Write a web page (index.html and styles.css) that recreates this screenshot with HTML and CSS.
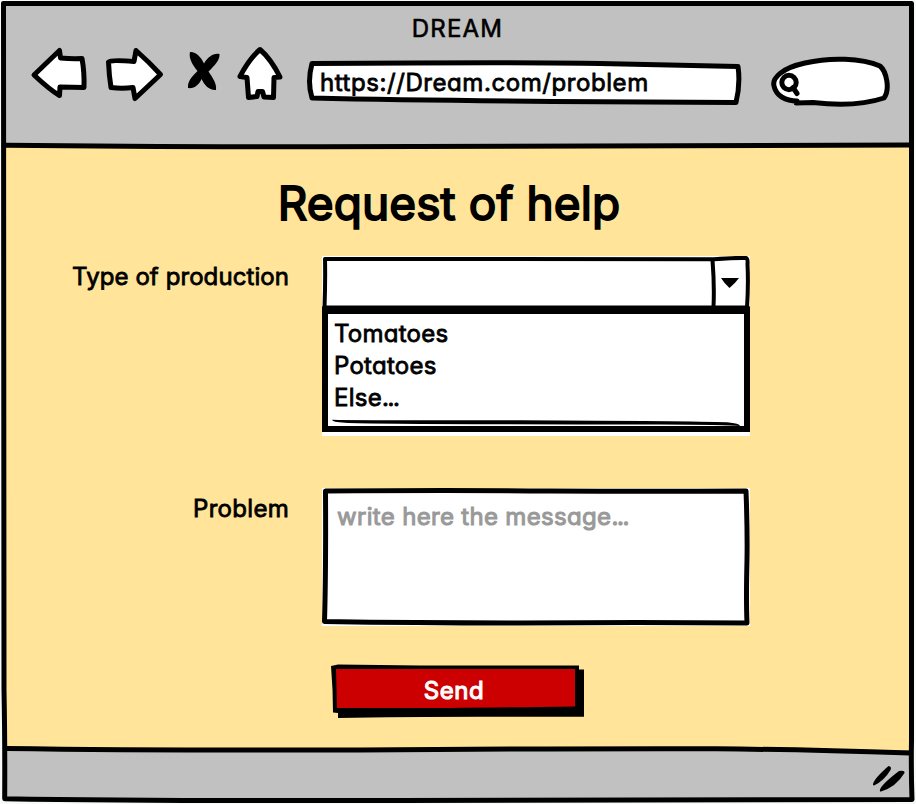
FILE: index.html
```html
<!DOCTYPE html>
<html lang="en">
<head>
<meta charset="utf-8">
<title>DREAM</title>
<link rel="stylesheet" href="styles.css">
</head>
<body>
<div class="window">
  <header class="chrome">
    <div class="chrome-title"><span>DREAM</span></div>
    <nav class="toolbar">
      <svg class="ink back" viewBox="30 45 58 60"><path d="M34 75 L59.5 50.5 L60.5 58 Q72 59 82 58.500 Q84.500 72 84 87.500 Q72 87 60 87 L59.500 95.500 Q50 90 34 75Z"/></svg>
      <svg class="ink forward" viewBox="104 45 62 60"><path d="M108.500 62 Q110 59.500 134 61.500 L136 50.500 Q149 62 160.500 74.500 L135 98.500 L133 87.500 Q122 89 111 87.500 Q109 75 108.500 62Z"/></svg>
      <svg class="solid stop" viewBox="186 45 36 60"><path d="M190 52 C196 51.500 201 57 204 63.500 C208 57 213 53 219.500 54 C220 60 215 65 208.500 71.500 C213 78 217 84 216 90 C209 90.500 204.500 85 201.500 79 C199 85 194 89 188 88 C187.500 81 191.500 77 197.500 71 C192.500 65 188.500 58 190 52Z"/></svg>
      <svg class="ink home" viewBox="236 45 48 60"><path d="M260 49.500 Q249 59 240 76.500 L247 77.500 L248.500 97.500 L257 96.500 L258 91.500 L262.500 91.500 L264 97 L273.500 97.500 L274 77.500 L280 77 Q271 59 260 49.500Z"/></svg>
      <div class="address">
        <svg class="ink sketch" viewBox="306 58 436 48"><path d="M312 63.500 Q530 62 600 63.500 Q690 65.500 738 66.500 Q740.500 84 736 102.500 L600 101.700 Q420 100.500 312 98 Q307 82 312 63.500Z"/></svg>
        <span class="t-url">https://Dream.com/problem</span>
      </div>
      <svg class="ink search" viewBox="769 55 122 52"><path d="M796 103 L813 102.500 C835 105 860 106 884 98 C890 90 887 72 880 66 C862 58 830 57 805 63 C782 68 772 78 774 86 C776 96 786 101 797 101"/><circle cx="789" cy="82.500" r="7.200"/><path d="M793 87.500 L797 93.500"/></svg>
    </nav>
  </header>

  <main class="page">
    <h1><span>Request of help</span></h1>
    <div class="row row-type">
      <label><span class="t-type">Type of production</span></label>
      <div class="combo">
        <div class="combo-field">
          <svg class="ink sketch thin" viewBox="322 256 428 52"><path d="M324.500 308 Q325.500 280 325 259 L500 259 L714 259.300 Q738 257.500 746 258 Q748 258.500 747.500 264 Q748.500 285 747 308"/><path d="M712.500 260 Q714.500 285 713.500 307"/><path class="fill" d="M721 278 L739 278 Q735 283.500 729.500 288 Q724 283 721 278Z"/><path d="M324 307.500 H748"/></svg>
        </div>
        <ul class="menu">
          <li>Tomatoes</li>
          <li>Potatoes</li>
          <li>Else<b class="dots">...</b></li>
        </ul>
        <svg class="solid scribble" viewBox="332 418 408 8"><path d="M332 419.700 Q350 420.300 520 420.300 Q690 421 727 422.300 Q740 423.500 740 426 Q725 424.800 660 424.500 Q380 424.500 345 422.800 Q332 422 332 419.700Z"/></svg>
      </div>
    </div>
    <div class="row row-problem">
      <label><span class="t-prob">Problem</span></label>
      <div class="message">
        <svg class="ink sketch" viewBox="322 488 428 138"><path d="M325.500 491 Q450 490 550 491 Q650 491.500 746 491 Q747.500 530 747 560 Q746 600 747 623 Q640 622 520 623 Q420 623 324.500 621.500 Q326 570 325.500 491Z"/></svg>
        <span class="t-msg">write here the message<b class="dots">...</b></span>
      </div>
    </div>
    <div class="send">
      <svg class="solid sketch" viewBox="331 664 253 54"><path d="M331 666 L338 664.500 L420 665.500 L579 665.500 V669.500 L584 669.500 V716.700 H480 Q400 716.700 338 718 V713 L333 712.500 Q333 690 331 666Z"/><path class="red" d="M336 669 H575 V706.500 Q500 707.500 450 708 L337 708 Q336.500 690 336 669Z"/></svg>
      <span class="t-send">Send</span>
    </div>
  </main>

  <footer class="status">
    <svg class="solid grip" viewBox="870 763 36 30"><path d="M873 785 Q872.500 780 888.500 766 Q892 766.500 890.500 770 Q884 781 874 785.500Z"/><path d="M880 791.500 Q878 787 899 771 Q905 770 904.500 773 Q896 787 881 791.500Z"/></svg>
  </footer>

  <svg class="frame" viewBox="0 0 916 804">
    <path class="paper" d="M0 0 H916 V804 H0Z M3 3 V801 H912 V3Z"/>
    <path d="M3.500 3.500 Q460 3 911.500 3.500 L911.500 740 Q911 770 912 799.500 Q700 800.500 400 800.500 Q150 801 4.700 798.700 Q5 740 4 690 Q3 400 3.500 3.500Z"/>
    <path d="M6 145.300 Q150 147 320 146.800 Q650 146 910 145"/>
    <path d="M6 748.500 Q150 750.500 360 750 Q550 748.500 716 748.800 Q800 749.500 910 753"/>
  </svg>
</div>
</body>
</html>
```
FILE: styles.css
```css
* { box-sizing: border-box; }

body {
  margin: 0;
  font-family: Inter, "Liberation Sans", sans-serif;
  font-feature-settings: "cv11", "calt" 0;
  font-size: 24px;
  font-weight: 400;
  line-height: 32px;
  letter-spacing: 0.25px;
  color: #000;
  white-space: nowrap;
}

span, li { -webkit-text-stroke: 0.8px currentColor; }

svg { display: block; flex: none; }

.window {
  position: relative;
  width: 916px;
  height: 804px;
  display: flex;
  flex-direction: column;
  overflow: hidden;
}

.chrome { height: 146px; background: #c1c1c1; }
.chrome-title { height: 45px; padding-top: 13px; padding-right: 1px; text-align: center; }
.chrome-title span { letter-spacing: 1.2px; -webkit-text-stroke-width: 0.6px; }

.toolbar { display: flex; align-items: flex-start; padding-left: 30px; }

.ink {
  fill: #fff;
  stroke: #000;
  stroke-width: 5px;
  stroke-linejoin: round;
  stroke-linecap: round;
}
.thin { stroke-width: 4px; }
.ink .fill { fill: #000; stroke: none; }
.solid { fill: #000; }
.solid .red { fill: #c00; }

.back { width: 58px; height: 60px; margin-right: 16px; }
.forward { width: 62px; height: 60px; margin-right: 20px; }
.stop { width: 36px; height: 60px; margin-right: 14px; }
.home { width: 48px; height: 60px; margin-right: 22px; }
.address { position: relative; width: 436px; height: 48px; margin: 13px 27px 0 0; padding: 9px 0 0 14px; }
.search { width: 122px; height: 52px; margin-top: 10px; }
.t-url { letter-spacing: 0.57px; }

.sketch { position: absolute; left: 0; top: 0; width: 100%; height: 100%; }
.sketch + span { position: relative; }

.page { height: 604px; background: #ffe49a; }
h1 { margin: 0; height: 110px; padding: 33px 18px 0 0; font-size: 46px; line-height: 48px; font-weight: 400; text-align: center; letter-spacing: 0.1px; }
h1 span { -webkit-text-stroke-width: 1.8px; }

.row { display: grid; grid-template-columns: 289px 428px; column-gap: 33px; }
.row label { text-align: right; padding-top: 5px; }
.row-type { height: 232px; }
.row-problem { height: 176px; }
.t-type { letter-spacing: 0.08px; }
.t-prob { letter-spacing: 0.3px; }

.combo { position: relative; height: 180px; background: #fff; }
.combo-field { position: relative; height: 52px; }
.menu { list-style: none; margin: 0; height: 124px; padding: 4px 0 0 6px; border: 6px solid #000; }
.dots { font-weight: 400; letter-spacing: -1.4px; }
.scribble { position: absolute; left: 10px; top: 162px; width: 408px; height: 8px; }

.message { position: relative; height: 138px; padding: 13px 0 0 15px; background: #fff; color: #999; }
.t-msg { letter-spacing: 0.32px; -webkit-text-stroke-width: 1px; }

.send { position: relative; width: 253px; height: 54px; margin-left: 331px; padding: 11px 7px 0 0; text-align: center; color: #fff; }
.t-send { letter-spacing: 0.6px; -webkit-text-stroke-width: 1.1px; }

.status { height: 54px; display: flex; justify-content: flex-end; padding: 13px 10px 0 0; background: #c1c1c1; }
.grip { width: 36px; height: 30px; }

.frame { position: absolute; inset: 0; width: 916px; height: 804px; fill: none; stroke: #000; stroke-width: 5px; stroke-linejoin: round; }
.frame .paper { fill: #f8faf9; fill-rule: evenodd; stroke: none; }
```
